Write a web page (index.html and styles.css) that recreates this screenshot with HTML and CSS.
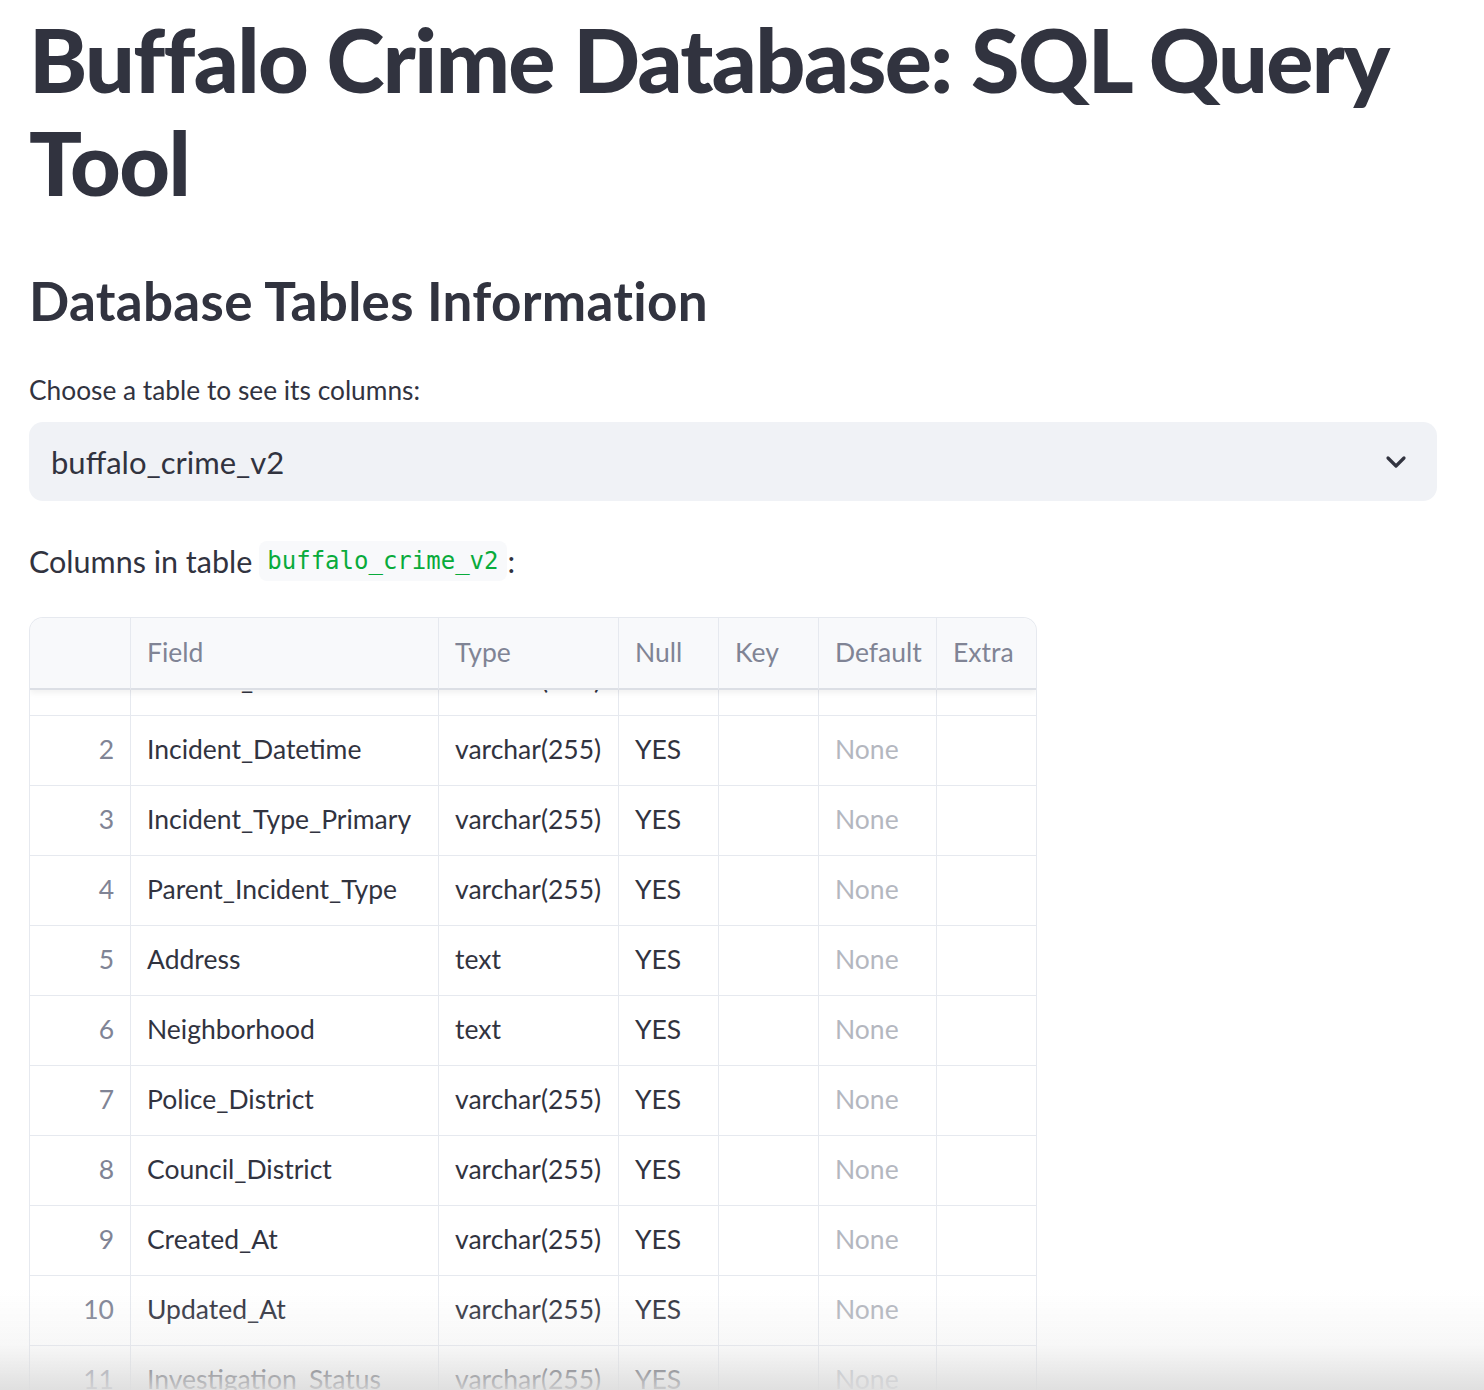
FILE: index.html
```html
<!DOCTYPE html>
<html lang="en">
<head>
<meta charset="utf-8">
<title>Buffalo Crime Database: SQL Query Tool</title>
<link rel="stylesheet" href="styles.css">
</head>
<body>
<main class="page">
  <h1 class="title">Buffalo Crime Database: SQL Query Tool</h1>
  <h2 class="subtitle">Database Tables Information</h2>
  <label class="label">Choose a table to see its columns:</label>
  <div class="select">
    <span class="select-value">buffalo_crime_v2</span>
    <svg class="chevron" width="22" height="14" viewBox="0 0 22 14"><path d="M3 3 L11 11 L19 3" fill="none" stroke="#31333f" stroke-width="3.2" stroke-linecap="round" stroke-linejoin="round"/></svg>
  </div>
  <p class="columns-line">Columns in table <code class="chip">buffalo_crime_v2</code>:</p>

  <div class="grid">
    <div class="row head">
      <div class="cell idx"></div>
      <div class="cell">Field</div>
      <div class="cell">Type</div>
      <div class="cell">Null</div>
      <div class="cell">Key</div>
      <div class="cell">Default</div>
      <div class="cell">Extra</div>
    </div>
    <div class="viewport">
      <div class="rows">
        <div class="row"><div class="cell idx">0</div><div class="cell">Case_Number</div><div class="cell">varchar(255)</div><div class="cell">YES</div><div class="cell"></div><div class="cell none">None</div><div class="cell"></div></div>
        <div class="row"><div class="cell idx">1</div><div class="cell">Incident_ID</div><div class="cell">varchar(255)</div><div class="cell">YES</div><div class="cell"></div><div class="cell none">None</div><div class="cell"></div></div>
        <div class="row"><div class="cell idx">2</div><div class="cell">Incident_Datetime</div><div class="cell">varchar(255)</div><div class="cell">YES</div><div class="cell"></div><div class="cell none">None</div><div class="cell"></div></div>
        <div class="row"><div class="cell idx">3</div><div class="cell">Incident_Type_Primary</div><div class="cell">varchar(255)</div><div class="cell">YES</div><div class="cell"></div><div class="cell none">None</div><div class="cell"></div></div>
        <div class="row"><div class="cell idx">4</div><div class="cell">Parent_Incident_Type</div><div class="cell">varchar(255)</div><div class="cell">YES</div><div class="cell"></div><div class="cell none">None</div><div class="cell"></div></div>
        <div class="row"><div class="cell idx">5</div><div class="cell">Address</div><div class="cell">text</div><div class="cell">YES</div><div class="cell"></div><div class="cell none">None</div><div class="cell"></div></div>
        <div class="row"><div class="cell idx">6</div><div class="cell">Neighborhood</div><div class="cell">text</div><div class="cell">YES</div><div class="cell"></div><div class="cell none">None</div><div class="cell"></div></div>
        <div class="row"><div class="cell idx">7</div><div class="cell">Police_District</div><div class="cell">varchar(255)</div><div class="cell">YES</div><div class="cell"></div><div class="cell none">None</div><div class="cell"></div></div>
        <div class="row"><div class="cell idx">8</div><div class="cell">Council_District</div><div class="cell">varchar(255)</div><div class="cell">YES</div><div class="cell"></div><div class="cell none">None</div><div class="cell"></div></div>
        <div class="row"><div class="cell idx">9</div><div class="cell">Created_At</div><div class="cell">varchar(255)</div><div class="cell">YES</div><div class="cell"></div><div class="cell none">None</div><div class="cell"></div></div>
        <div class="row"><div class="cell idx">10</div><div class="cell">Updated_At</div><div class="cell">varchar(255)</div><div class="cell">YES</div><div class="cell"></div><div class="cell none">None</div><div class="cell"></div></div>
        <div class="row"><div class="cell idx">11</div><div class="cell">Investigation_Status</div><div class="cell">varchar(255)</div><div class="cell">YES</div><div class="cell"></div><div class="cell none">None</div><div class="cell"></div></div>
        <div class="row"><div class="cell idx">12</div><div class="cell">Latitude</div><div class="cell">varchar(255)</div><div class="cell">YES</div><div class="cell"></div><div class="cell none">None</div><div class="cell"></div></div>
      </div>
    </div>
  </div>
</main>
<div class="fade"></div>
</body>
</html>
```
FILE: styles.css
```css
html, body {
  margin: 0;
  padding: 0;
  background: #ffffff;
}
body {
  font-family: "Lato", "Noto Sans", sans-serif;
  color: #31333f;
  height: 1390px;
  overflow: hidden;
}
.page {
  padding: 0 48px 0 29px;
}
.title {
  margin: 0;
  padding-top: 8px;
  font-size: 88px;
  font-weight: 900;
  line-height: 103px;
  letter-spacing: -1.6px;
}
.subtitle {
  margin: 52px 0 0 0;
  font-size: 53px;
  font-weight: 700;
  line-height: 70px;
  letter-spacing: 0.3px;
}
.label {
  display: block;
  margin-top: 36px;
  font-size: 26.3px;
  line-height: 36px;
}
.select {
  margin-top: 14px;
  width: 1408px;
  height: 79px;
  box-sizing: border-box;
  background: #f0f2f6;
  border-radius: 14px;
  display: flex;
  align-items: center;
  justify-content: space-between;
  padding: 0 30px 0 22px;
}
.select-value {
  font-size: 31px;
}
.chevron {
  display: block;
}
.columns-line {
  margin: 38px 0 0 0;
  font-size: 30.5px;
  line-height: 44px;
  display: flex;
  align-items: center;
}
.chip {
  font-family: "DejaVu Sans Mono", "Liberation Mono", monospace;
  font-size: 24px;
  color: #09ab3b;
  background: #f8f9fb;
  border-radius: 8px;
  padding: 6px 8px;
  margin-left: 7px;
  margin-right: 1px;
  line-height: 28px;
}
.grid {
  margin-top: 34px;
  width: 1006px;
  border: 1px solid #e6e9ef;
  border-bottom: none;
  border-radius: 14px 14px 0 0;
  overflow: hidden;
}
.row {
  display: grid;
  grid-template-columns: 101px 308px 180px 100px 100px 118px 99px;
  height: 70px;
}
.cell {
  border-right: 1px solid #e6e9ef;
  border-bottom: 1px solid #e6e9ef;
  display: flex;
  align-items: center;
  padding: 0 16px 3px 16px;
  font-size: 26.5px;
  white-space: nowrap;
  overflow: hidden;
}
.row .cell:last-child {
  border-right: none;
}
.head {
  height: 72px;
  background: #f8f9fb;
  position: relative;
  z-index: 2;
  box-shadow: 0 3px 6px rgba(0, 0, 0, 0.06);
}
.head .cell {
  color: #808495;
  border-bottom: 2px solid #dcdfe5;
  padding-bottom: 2px;
}
.idx {
  justify-content: flex-end;
  color: #808495;
}
.none {
  color: #b4b7bf;
}
.viewport {
  height: 720px;
  overflow: hidden;
}
.rows {
  margin-top: -114px;
}
.fade {
  position: fixed;
  left: 0;
  right: 0;
  bottom: 0;
  height: 100px;
  background: linear-gradient(to bottom, rgba(224, 224, 224, 0), rgba(224, 224, 224, 0.25) 55%, rgba(220, 220, 220, 0.9));
  pointer-events: none;
}
```
